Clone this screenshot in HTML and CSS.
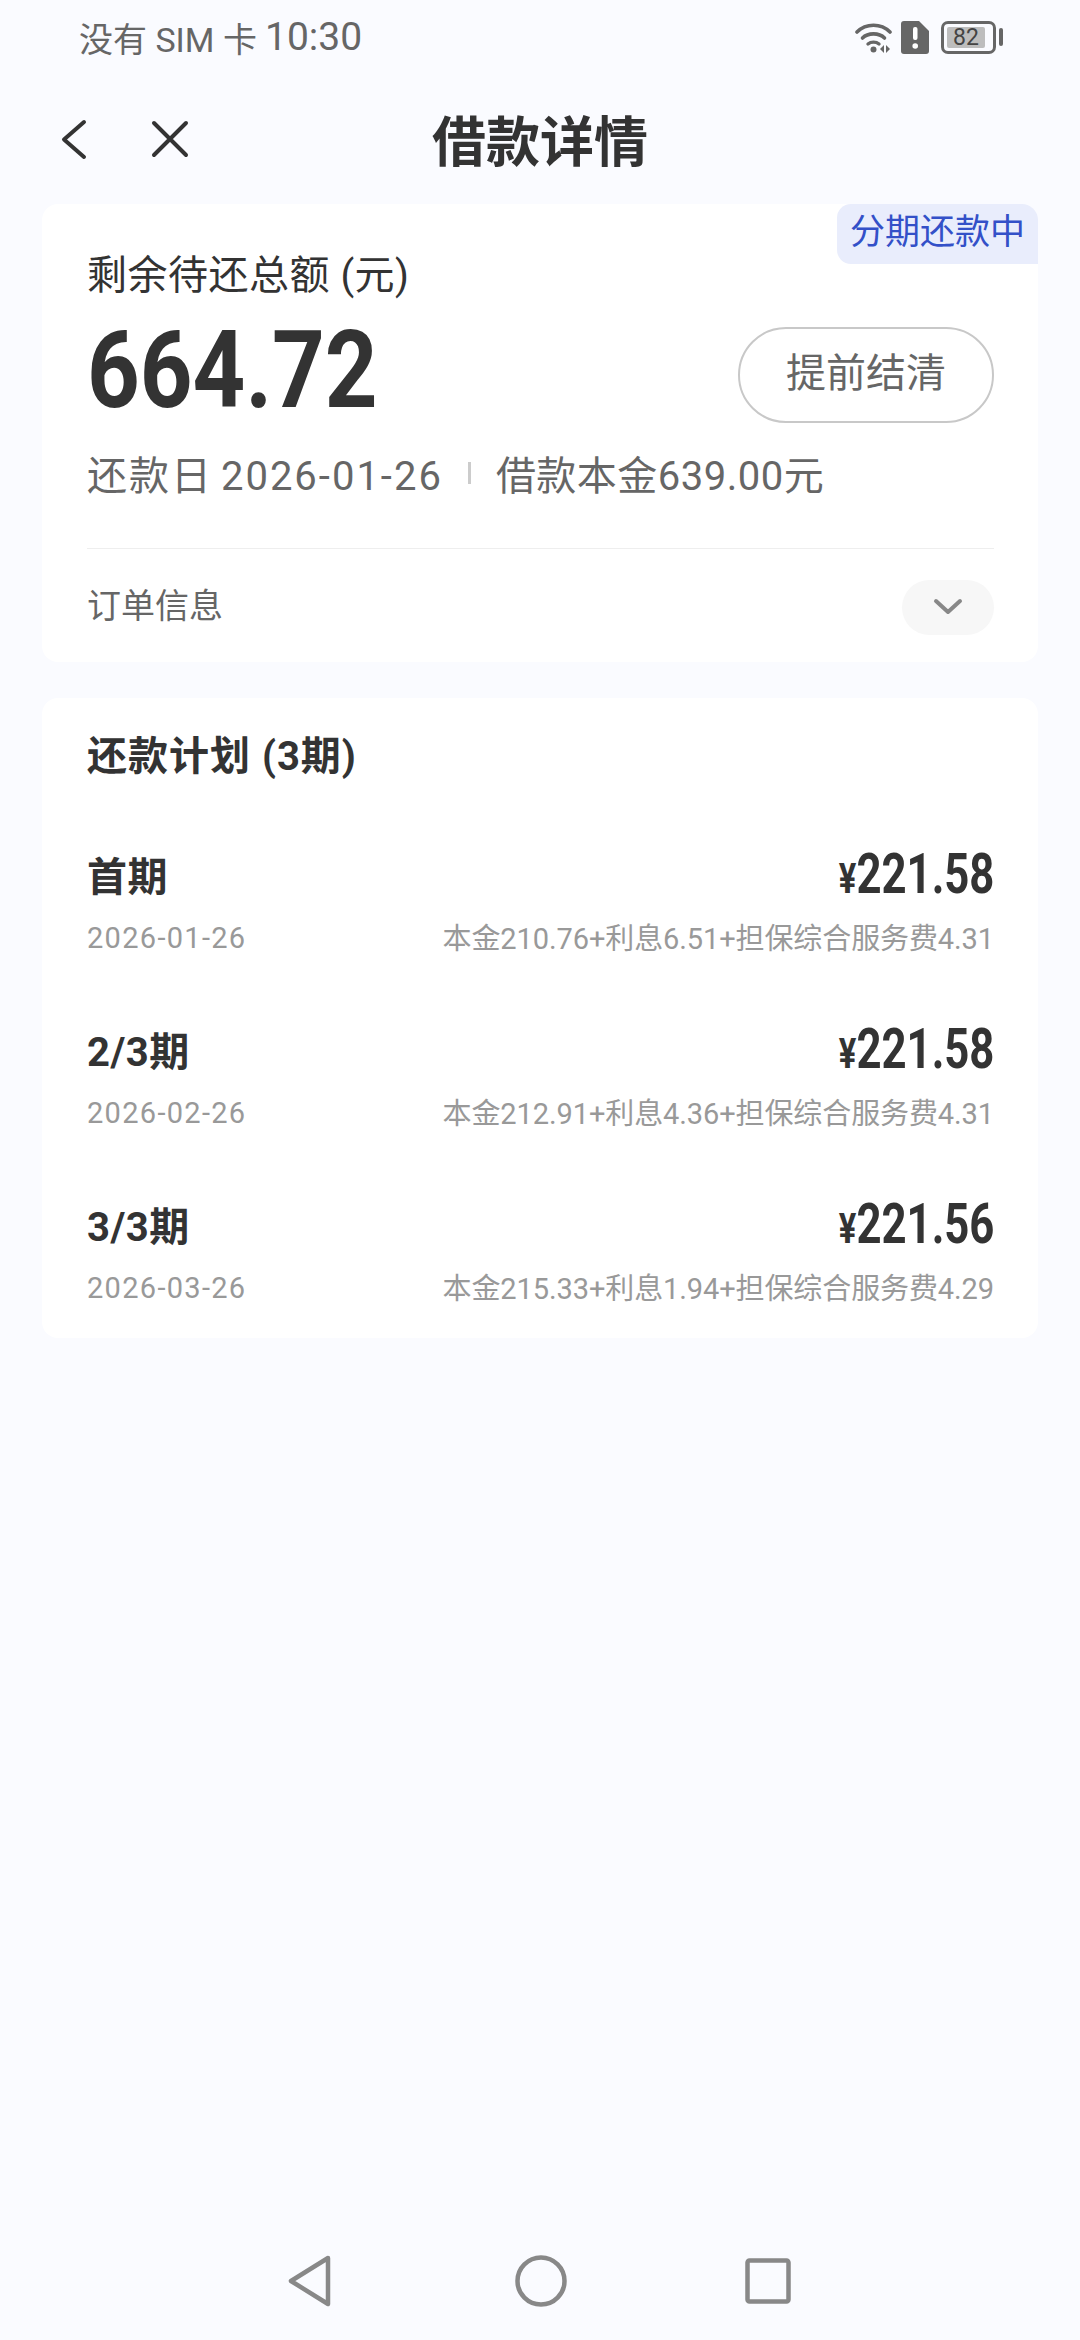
FILE: index.html
```html
<!doctype html>
<html lang="zh-CN">
<head>
	<meta charset="utf-8">
	<title>借款详情</title>
	<link rel="stylesheet" href="styles.css">
</head>
<body>
	<main class="page">
		<div class="status-bar">
			<div class="status-text">没有 SIM 卡<span class="status-time">10:30</span></div>
			<div class="status-icons">
				<svg class="icon-wifi" viewBox="0 0 37 33">
					<path d="M2 11 C11 2 26 2 35 11" fill="none" stroke="#666" stroke-width="3.6" stroke-linecap="round"></path>
					<path d="M7.500 17 C13 11.500 24 11.500 29.500 17" fill="none" stroke="#666" stroke-width="3.6" stroke-linecap="round"></path>
					<path d="M13 23 C16 20.500 21 20.500 24 23" fill="none" stroke="#666" stroke-width="3.4" stroke-linecap="round"></path>
					<circle cx="18.500" cy="28.500" r="3" fill="#666"></circle>
					<path d="M29 24 V32 L25 28 Z M31 24 V32 L35 28 Z" fill="#666"></path>
				</svg>
				<svg class="icon-sim" viewBox="0 0 28 33">
					<path d="M3 0 H18 L28 10 V30 Q28 33 25 33 H3 Q0 33 0 30 V3 Q0 0 3 0 Z" fill="#666"></path>
					<rect x="12" y="6" width="4.500" height="13" rx="2" fill="#fff"></rect>
					<circle cx="14.200" cy="25" r="2.800" fill="#fff"></circle>
				</svg>
				<div class="battery">
					<div class="battery-body"><span class="battery-level">82</span></div>
					<div class="battery-nub"></div>
				</div>
			</div>
		</div>

		<header class="nav-bar">
			<svg class="icon-back" viewBox="0 0 26 41">
				<path d="M23 3 L3 20.500 L23 38" fill="none" stroke="#333" stroke-width="4" stroke-linecap="round" stroke-linejoin="round"></path>
			</svg>
			<svg class="icon-close" viewBox="0 0 38 38">
				<path d="M3 3 L35 35 M35 3 L3 35" fill="none" stroke="#333" stroke-width="4" stroke-linecap="round"></path>
			</svg>
			<h1 class="nav-title">借款详情</h1>
		</header>

		<section class="card summary">
			<div class="badge">分期还款中</div>
			<div class="summary-label">剩余待还总额 (元)</div>
			<div class="summary-main">
				<div class="summary-amount">664.72</div>
				<div class="settle-button">提前结清</div>
			</div>
			<div class="summary-meta">
				<span class="meta-date">还款日 2026-01-26</span>
				<span class="meta-sep"></span>
				<span class="meta-principal">借款本金639.00元</span>
			</div>
			<div class="order-row">
				<span class="order-label">订单信息</span>
				<div class="expand-pill">
					<svg class="icon-chevron" viewBox="0 0 30 18">
						<path d="M3 3 L15 14 L27 3" fill="none" stroke="#888" stroke-width="4" stroke-linecap="round" stroke-linejoin="round"></path>
					</svg>
				</div>
			</div>
		</section>

		<section class="card plan">
			<h2 class="plan-title">还款计划 (3期)</h2>
			<div class="plan-row">
				<div class="plan-top"><span class="plan-name">首期</span><span class="plan-amount"><small>¥</small>221.58</span></div>
				<div class="plan-bottom"><span class="plan-date">2026-01-26</span><span class="plan-detail">本金210.76+利息6.51+担保综合服务费4.31</span></div>
			</div>
			<div class="plan-row">
				<div class="plan-top"><span class="plan-name">2/3期</span><span class="plan-amount"><small>¥</small>221.58</span></div>
				<div class="plan-bottom"><span class="plan-date">2026-02-26</span><span class="plan-detail">本金212.91+利息4.36+担保综合服务费4.31</span></div>
			</div>
			<div class="plan-row">
				<div class="plan-top"><span class="plan-name">3/3期</span><span class="plan-amount"><small>¥</small>221.56</span></div>
				<div class="plan-bottom"><span class="plan-date">2026-03-26</span><span class="plan-detail">本金215.33+利息1.94+担保综合服务费4.29</span></div>
			</div>
		</section>

		<nav class="system-nav">
			<svg class="icon-nav-back" viewBox="0 0 44 52">
				<path d="M40 3 L3 26 L40 49 Z" fill="none" stroke="#888" stroke-width="4.500" stroke-linejoin="round"></path>
			</svg>
			<svg class="icon-nav-home" viewBox="0 0 52 52">
				<circle cx="26" cy="26" r="23.500" fill="none" stroke="#888" stroke-width="4.500"></circle>
			</svg>
			<svg class="icon-nav-recent" viewBox="0 0 46 46">
				<rect x="2.500" y="2.500" width="41" height="41" rx="2" fill="none" stroke="#888" stroke-width="4.500"></rect>
			</svg>
		</nav>
	</main>
</body>
</html>
```

FILE: styles.css
```css
* {
	box-sizing: border-box;
}
html, body {
	margin: 0;
	padding: 0;
	background-color: #FAFBFF;
}
body {
	font-family: Roboto, "Noto Sans CJK SC", sans-serif;
	color: #333333;
}
.page {
	display: flex;
	flex-direction: column;
	width: 1080px;
	height: 2340px;
	overflow: hidden;
}

/* status bar */
.status-bar {
	display: flex;
	justify-content: space-between;
	align-items: center;
	height: 74px;
	padding: 0 77px 0 79px;
}
.status-text {
	display: flex;
	align-items: center;
	gap: 8px;
	font-size: 34px;
	color: #666666;
}
.status-time {
	font-size: 39px;
}
.status-icons {
	display: flex;
	align-items: center;
	gap: 9px;
}
.icon-wifi {
	width: 37px;
	height: 33px;
}
.icon-sim {
	width: 28px;
	height: 33px;
	margin-right: 3px;
}
.battery {
	display: flex;
	align-items: center;
	gap: 3px;
}
.battery-body {
	display: flex;
	align-items: center;
	width: 55px;
	height: 33px;
	padding: 2px 3px;
	border: 3px solid #666666;
	border-radius: 7px;
}
.battery-level {
	display: block;
	width: 38px;
	height: 21px;
	background-color: #BDBDBD;
	border-radius: 2px;
	font-size: 23px;
	line-height: 21px;
	text-align: center;
	color: #444444;
}
.battery-nub {
	width: 4px;
	height: 18px;
	border-radius: 2px;
	background-color: #666666;
}

/* title bar */
.nav-bar {
	position: relative;
	display: flex;
	align-items: center;
	height: 130px;
	padding-left: 61px;
}
.icon-back {
	width: 26px;
	height: 41px;
}
.icon-close {
	width: 38px;
	height: 38px;
	margin-left: 64px;
}
.nav-title {
	position: absolute;
	left: 0;
	right: 0;
	margin: 0;
	padding-bottom: 2px;
	font-size: 54px;
	font-weight: 700;
	text-align: center;
	color: #333333;
}

/* cards */
.card {
	position: relative;
	margin: 0 42px;
	padding: 0 44px 0 45px;
	background-color: #FFFFFF;
	border-radius: 16px;
}
.summary {
	height: 458px;
}
.badge {
	position: absolute;
	top: 0;
	right: 0;
	width: 201px;
	height: 60px;
	background-color: #E9EDFC;
	border-radius: 14px 16px 0 14px;
	font-size: 35px;
	line-height: 58px;
	text-align: center;
	color: #3350C8;
}
.summary-label {
	padding-top: 44px;
	font-size: 40px;
	line-height: 56px;
	letter-spacing: .5px;
	color: #333333;
}
.summary-main {
	display: flex;
	justify-content: space-between;
	align-items: center;
	height: 130px;
	margin-top: 1px;
}
.summary-amount {
	font-size: 107px;
	font-weight: 700;
	color: #333333;
	transform: scaleX(.86);
	transform-origin: left center;
}
.settle-button {
	width: 256px;
	height: 96px;
	margin-top: 10px;
	border: 2px solid #C8C8C8;
	border-radius: 48px;
	font-size: 40px;
	line-height: 90px;
	text-align: center;
	color: #666666;
}
.summary-meta {
	display: flex;
	align-items: center;
	height: 60px;
	margin-top: 8px;
	font-size: 40px;
	color: #666666;
}
.meta-date {
	letter-spacing: 2px;
	word-spacing: -4px;
}
.meta-principal {
	letter-spacing: .5px;
}
.meta-sep {
	width: 3px;
	height: 22px;
	margin: 0 25px;
	background-color: #CCCCCC;
}
.order-row {
	display: flex;
	justify-content: space-between;
	align-items: center;
	height: 114px;
	margin-top: 45px;
	border-top: 1px solid #EEEEEE;
	font-size: 34px;
	color: #666666;
}
.order-label {
	padding-bottom: 4px;
}
.expand-pill {
	display: flex;
	justify-content: center;
	align-items: center;
	width: 92px;
	height: 55px;
	margin-top: 3px;
	border-radius: 28px;
	background-color: #F7F7F7;
}
.icon-chevron {
	width: 30px;
	height: 18px;
}
.plan {
	height: 640px;
	margin-top: 36px;
}
.plan-title {
	margin: 0;
	padding-top: 31px;
	font-size: 40px;
	font-weight: 700;
	line-height: 56px;
	letter-spacing: 1px;
	color: #333333;
}
.plan-row {
	height: 175px;
}
.plan-row:first-of-type {
	margin-top: 54px;
}
.plan-top {
	display: flex;
	justify-content: space-between;
	align-items: center;
	height: 70px;
}
.plan-name {
	font-size: 40px;
	font-weight: 700;
	letter-spacing: .5px;
}
.plan-amount {
	font-size: 56px;
	font-weight: 700;
	transform: scaleX(.78);
	transform-origin: right center;
}
.plan-amount small {
	font-size: 42px;
}
.plan-bottom {
	display: flex;
	justify-content: space-between;
	align-items: center;
	height: 44px;
	margin-top: 5px;
	font-size: 29px;
	color: #999999;
}
.plan-date {
	padding-top: 4px;
	letter-spacing: 1.3px;
}
.plan-detail {
	letter-spacing: -.1px;
}

/* system navigation */
.system-nav {
	display: flex;
	justify-content: space-between;
	align-items: center;
	height: 52px;
	margin-top: auto;
	margin-bottom: 33px;
	padding: 0 289px 0 288px;
}
.icon-nav-back {
	width: 44px;
	height: 52px;
}
.icon-nav-home {
	width: 52px;
	height: 52px;
	margin-left: 4px;
}
.icon-nav-recent {
	width: 46px;
	height: 46px;
}
```
